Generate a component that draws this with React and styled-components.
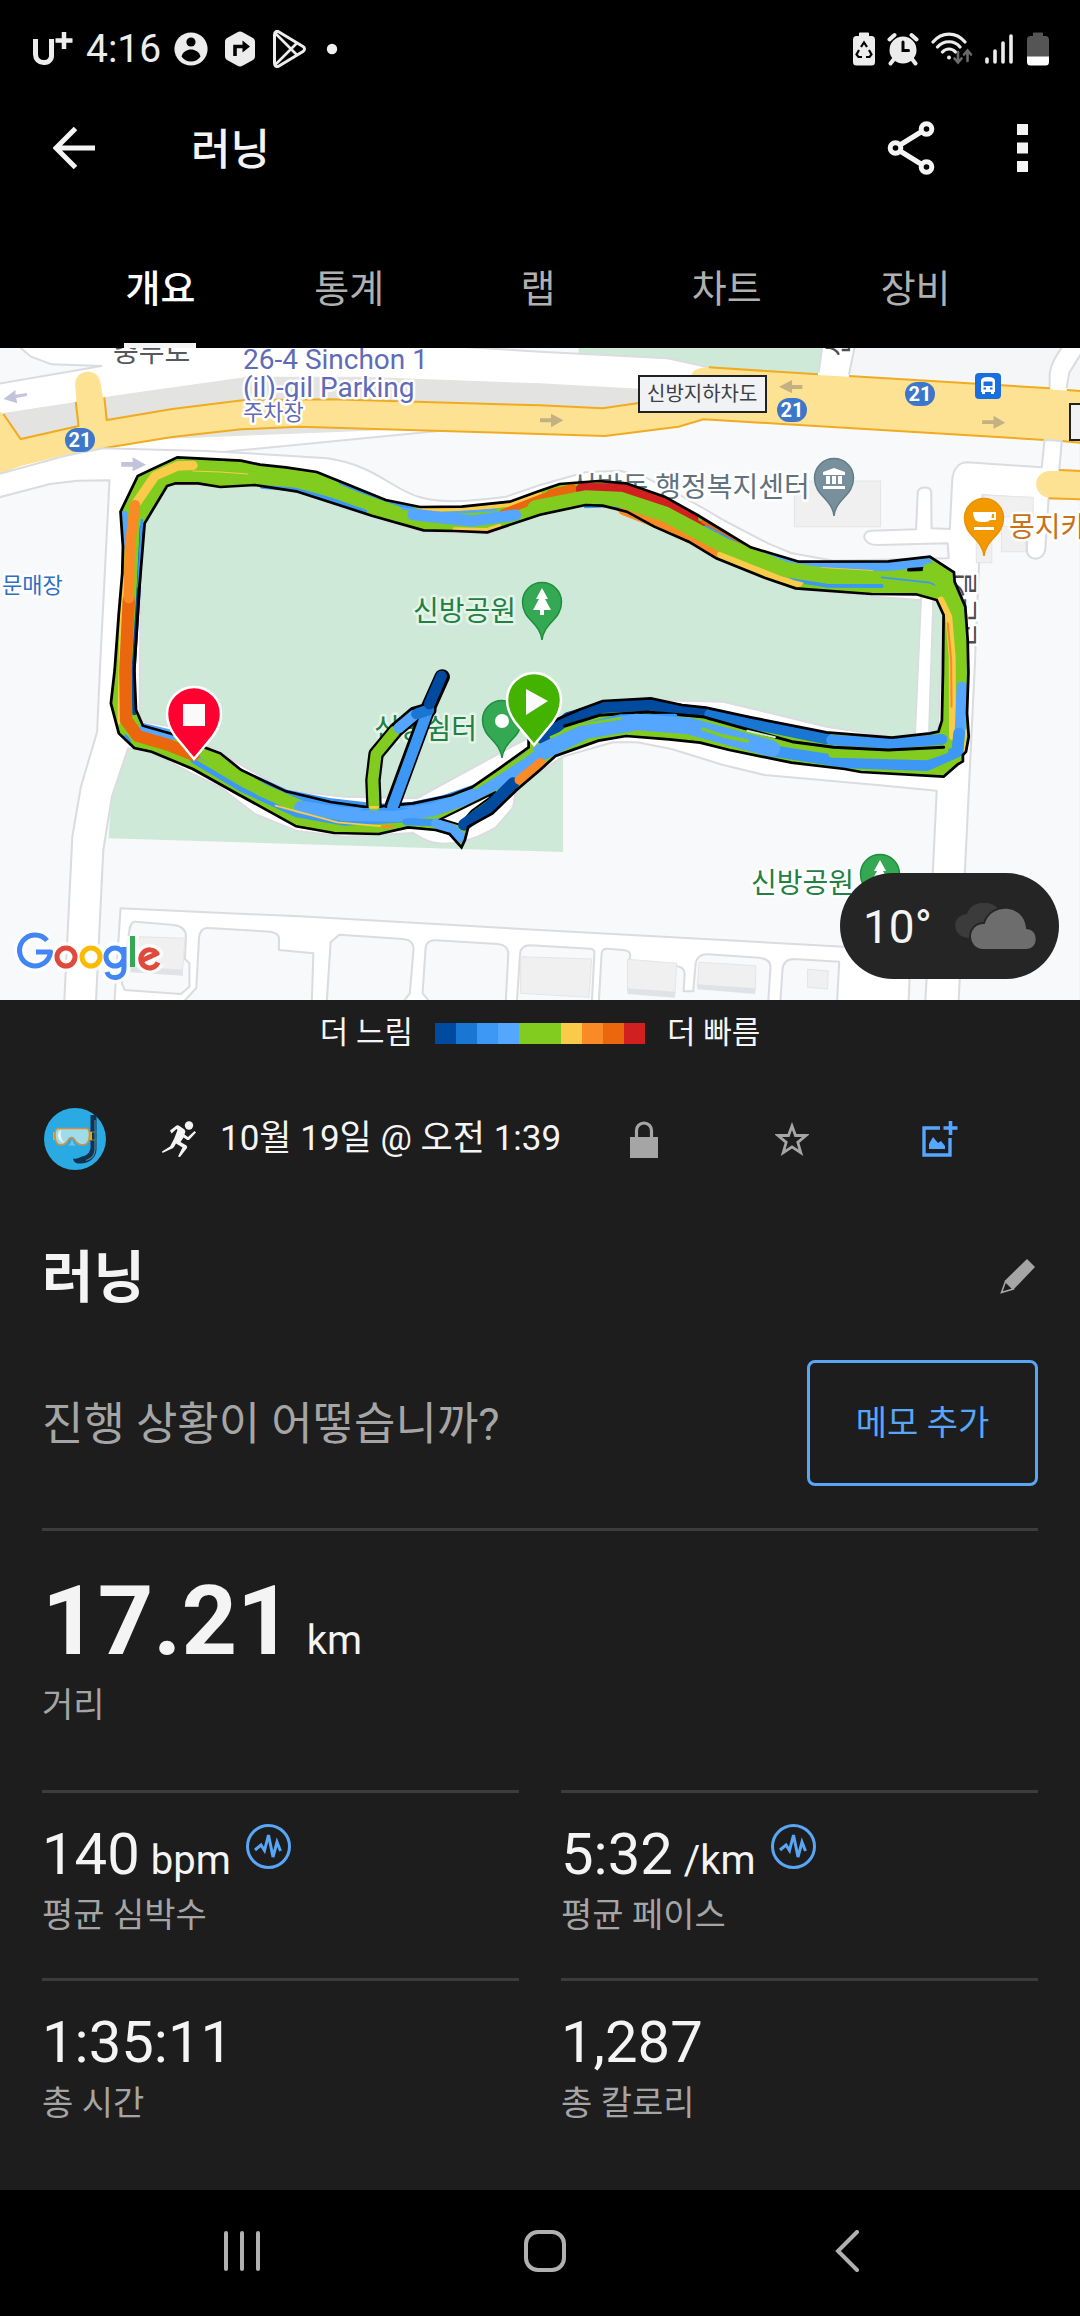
import React from "react";
import styled, { createGlobalStyle } from "styled-components";

const color = {
  panel: "#1d1d1d",
  text: "#f4f4f4",
  muted: "#a5a5a5",
  accent: "#58a6f5",
  line: "#3c3c3c",
  navy: "#004a9f",
  deepBlue: "#1976d2",
  blue: "#3c97f5",
  sky: "#55a6ff",
  green: "#82cb1f",
  yellow: "#facb4a",
  orange: "#fa8a26",
  deepOrange: "#ea670e",
  red: "#d22020",
};

const GlobalStyle = createGlobalStyle`
  * { box-sizing: border-box; }
  body { margin: 0; background: #000; }
  button { font: inherit; color: inherit; background: none; border: 0; padding: 0; cursor: pointer; }
  svg { display: block; }
`;

const Screen = styled.div`
  min-height: 100vh;
  display: flex;
  flex-direction: column;
  background: #000;
  color: ${color.text};
  font-family: Roboto, "Noto Sans CJK KR", sans-serif;
`;

/* ---------- header ---------- */

const StatusBar = styled.div`
  height: 98px;
  padding: 0 31px 0 32px;
  display: flex;
  align-items: center;
  justify-content: space-between;
`;

const StatusGroup = styled.div`
  display: flex;
  align-items: center;
  gap: ${(p) => p.$gap}px;
`;

const Clock = styled.time`
  font-size: 39px;
  line-height: 48px;
  color: #ececec;
`;

const AppBar = styled.header`
  height: 100px;
  padding: 0 26px 0 42px;
  display: flex;
  align-items: center;
`;

const AppActions = styled.div`
  display: flex;
  gap: 47px;
`;

const IconButton = styled.button`
  width: ${(p) => p.$width}px;
  height: 64px;
  flex: none;
  display: flex;
  align-items: center;
  justify-content: center;
`;

const AppTitle = styled.h1`
  flex: 1;
  margin: 0 0 0 85px;
  padding-top: 4px;
  font-size: 43px;
  line-height: 64px;
  font-weight: 500;
`;

const Tabs = styled.nav`
  height: 150px;
  padding: 0 70px 0 66px;
  display: grid;
  grid-template-columns: repeat(5, 1fr);
`;

const Tab = styled.button`
  display: flex;
  flex-direction: column;
  align-items: center;
  justify-content: space-between;
  font-size: 38px;
  line-height: 50px;
  padding-top: 66px;
  font-weight: ${(p) => (p.$active ? 500 : 400)};
  color: ${(p) => (p.$active ? "#fff" : "#b0b0b0")};

  &::after {
    content: "";
    width: 72px;
    height: 5px;
    background: ${(p) => (p.$active ? "#f4f4f4" : "transparent")};
  }
`;

/* ---------- map ---------- */

const MapArea = styled.section`
  position: relative;
`;

const MapSvg = styled.svg`
  width: 100%;
  height: auto;
`;

const Weather = styled.div`
  position: absolute;
  right: 21px;
  bottom: 21px;
  width: 219px;
  height: 106px;
  border-radius: 53px;
  background: #252525;
  padding: 2px 22px 0 23px;
  display: flex;
  align-items: center;
  justify-content: space-between;
  font-size: 46px;
  line-height: 60px;
`;

const MapLabel = styled.text`
  font-size: ${(p) => p.$size || 28}px;
  fill: ${(p) => p.$fill};
  paint-order: stroke;
  stroke: ${(p) => p.$halo || "#fff"};
  stroke-width: 5px;
  stroke-linejoin: round;
`;

const BadgeText = styled.text`
  font-size: 20px;
  font-weight: 700;
  fill: #fff;
  text-anchor: middle;
`;

const SignText = styled.text`
  font-size: 20px;
  fill: #3c4043;
`;

/* ---------- details ---------- */

const Details = styled.main`
  flex: 1;
  background: ${color.panel};
`;

const Legend = styled.div`
  height: 66px;
  display: flex;
  align-items: center;
  justify-content: center;
  gap: 22px;
  font-size: 31px;
  line-height: 42px;
`;

const Scale = styled.div`
  display: flex;
`;

const Swatch = styled.span`
  width: 21px;
  height: 21px;
  background: ${(p) => p.$color};
`;

const Content = styled.div`
  padding: 0 42px;
`;

const InfoRow = styled.div`
  height: 146px;
  padding-left: 2px;
  display: flex;
  align-items: center;
`;

const Sport = styled.div`
  margin-left: 56px;
  flex: 1;
  display: flex;
  align-items: center;
  gap: 24px;
  font-size: 35px;
  line-height: 48px;
`;

const InfoActions = styled.div`
  display: flex;
  gap: 84px;
  margin-right: 66px;
`;

const TitleRow = styled.div`
  height: 128px;
  display: flex;
  align-items: center;
  justify-content: space-between;
`;

const ActivityTitle = styled.h2`
  margin: 0;
  padding-top: 4px;
  font-size: 56px;
  line-height: 72px;
  font-weight: 700;
`;

const NoteRow = styled.div`
  padding: 20px 0 42px;
  display: flex;
  align-items: center;
  justify-content: space-between;
`;

const Prompt = styled.p`
  margin: 0;
  padding-top: 4px;
  font-size: 45px;
  line-height: 60px;
  color: ${color.muted};
`;

const NoteButton = styled.button`
  width: 231px;
  height: 126px;
  border: 3px solid ${color.accent};
  border-radius: 8px;
  font-size: 34px;
  line-height: 44px;
  color: ${color.accent};
`;

const Stats = styled.dl`
  margin: 0;
  display: grid;
  grid-template-columns: 1fr 1fr;
  column-gap: 42px;
`;

const Stat = styled.div`
  grid-column: ${(p) => (p.$wide ? "1 / -1" : "auto")};
  height: ${(p) => (p.$wide ? 262 : 188)}px;
  border-top: 3px solid ${color.line};
  padding-top: ${(p) => (p.$wide ? 32 : 26)}px;
  display: flex;
  flex-direction: column-reverse;
  justify-content: flex-end;
`;

const StatLabel = styled.dt`
  margin-top: 4px;
  font-size: 34px;
  line-height: 44px;
  color: ${color.muted};
`;

const StatValue = styled.dd`
  margin: 0;
  height: ${(p) => (p.$wide ? 116 : 70)}px;
  display: flex;
  align-items: baseline;
  gap: ${(p) => (p.$wide ? 14 : 11)}px;
  font-size: ${(p) => (p.$wide ? 97 : 58)}px;
  line-height: ${(p) => (p.$wide ? 116 : 70)}px;
  font-weight: ${(p) => (p.$wide ? 700 : 400)};
`;

const Unit = styled.span`
  font-size: 40px;
  line-height: 48px;
  font-weight: 400;
`;

const Pulse = styled.button`
  align-self: flex-start;
  margin: 5px 0 0 4px;
`;

const NavBar = styled.nav`
  height: 126px;
  padding: 0 81px 4px 90px;
  display: grid;
  grid-template-columns: repeat(3, 1fr);
`;

const NavButton = styled.button`
  display: flex;
  align-items: center;
  justify-content: center;
`;

/* ---------- icons ---------- */

const CarrierLogo = () => (
  <svg width="41" height="36" viewBox="0 0 41 36" fill="none" stroke="#ececec" aria-label="U+">
    <path d="M3.500 8V23.500a8 8 0 0 0 8 8h1a7 7 0 0 0 7-8V8" strokeWidth="5" />
    <path d="M32 1v17M23.500 9.500h17" strokeWidth="4.500" />
  </svg>
);

const AccountIcon = () => (
  <svg width="34" height="34" viewBox="0 0 34 34">
    <circle cx="17" cy="17" r="16.600" fill="#ececec" />
    <circle cx="17" cy="10" r="4.600" fill="#000" />
    <path d="M7.500 24.500C9 19.500 13 17.500 17 17.500s8 2 9.500 7C24.500 27.500 21 29.500 17 29.500s-7.500-2-9.500-5Z" fill="#000" />
  </svg>
);

const HexTurnIcon = () => (
  <svg width="32" height="36" viewBox="0 0 32 36">
    <path d="M16 .5c1 0 2 .3 3 1l9.500 5.300c1.700 1 2.500 2.200 2.500 4v14.400c0 1.800-.8 3-2.500 4L19 34.500c-2 1.300-4 1.300-6 0L3.500 29.200c-1.700-1-2.500-2.200-2.500-4V10.800c0-1.800.8-3 2.500-4L13 1.500c1-.7 2-1 3-1Z" fill="#ececec" />
    <path d="M11 25V15.500h8" fill="none" stroke="#000" strokeWidth="3.600" />
    <path d="M18.500 9.500v12l7.500-6Z" fill="#000" />
  </svg>
);

const PlayStoreIcon = () => (
  <svg width="34" height="38" viewBox="0 0 34 38" fill="none" stroke="#ececec" strokeWidth="3" strokeLinejoin="round">
    <path d="M2.500 5v28c0 3 2 4.500 4.500 3L31 21.500c2-1.200 2-3.800 0-5L7 2C4.500.5 2.500 2 2.500 5Z" />
    <path d="M3.500 3.500 25 25M3.500 34.500 25 13" strokeWidth="2.600" />
  </svg>
);

const MoreDot = () => (
  <svg width="20" height="12" viewBox="0 0 20 12">
    <circle cx="10" cy="6" r="5.200" fill="#f0f0f0" />
  </svg>
);

const RecycleBattery = () => (
  <svg width="22" height="34" viewBox="0 0 22 34">
    <path d="M6 1.500Q6 .5 7 .5h8q1 0 1 1V4h2.500Q22 4 22 8v22q0 3.500-3.500 3.500h-15Q0 33.500 0 30V8q0-4 3.500-4H6Z" fill="#ececec" />
    <path d="m8 15 3-4.500 3 4.500M16 18l2.500 4.500-2 2.500H13M9 25H5.500l-2-2.500L6 18" fill="none" stroke="#000" strokeWidth="2.200" />
  </svg>
);

const AlarmIcon = () => (
  <svg width="32" height="34" viewBox="0 0 32 34">
    <circle cx="16" cy="18" r="13.500" fill="#ececec" />
    <path d="M2.500 7.500 7.500 3M29.500 7.500l-5-4.500M7 27l-3.500 4.500M25 27l3.500 4.500" stroke="#ececec" strokeWidth="4" strokeLinecap="round" />
    <path d="M16 10v8.500h5.500" fill="none" stroke="#000" strokeWidth="3" strokeLinecap="round" />
  </svg>
);

const WifiIcon = () => (
  <svg width="42" height="34" viewBox="0 0 42 34" fill="none" stroke="#ececec" strokeWidth="3.200" strokeLinecap="round">
    <path d="M2 10C11-.5 25-.5 34 10M6.500 15c6-7 17-7 22.500 0M11.500 20c3.500-4 9.500-4 13 0" />
    <circle cx="18" cy="25.500" r="2" fill="#ececec" stroke="none" />
    <path d="M27 20v10m-3.500-3.500L27 30.500l3.500-4M36.500 29V19m-3.500 3.500 3.500-4 3.500 4" stroke="#6a6a6a" strokeWidth="2.600" />
  </svg>
);

const SignalIcon = () => (
  <svg width="30" height="32" viewBox="0 0 30 32" stroke="#ececec" strokeWidth="3.600" strokeLinecap="round">
    <path d="M2 26v3M10 18v11M18 10v19M26 3v26" />
  </svg>
);

const BatteryIcon = () => (
  <svg width="22" height="34" viewBox="0 0 22 34">
    <path d="M6 1.500Q6 .5 7 .5h8q1 0 1 1V4h2.500Q22 4 22 8v17H0V8q0-4 3.500-4H6Z" fill="#555" />
    <path d="M0 24.500h22V30q0 3.500-3.500 3.500h-15Q0 33.500 0 30Z" fill="#fff" />
  </svg>
);

const BackArrow = () => (
  <svg width="42" height="42" viewBox="0 0 42 42" fill="none" stroke="#f4f4f4" strokeWidth="5">
    <path d="M42 21H5M22.500 1.500 3 21l19.500 19.500" />
  </svg>
);

const ShareIcon = () => (
  <svg width="48" height="54" viewBox="0 0 48 54" fill="none" stroke="#f4f4f4" strokeWidth="5">
    <path d="M13 24 34 11M13 30l21 13" />
    <circle cx="8.500" cy="27" r="5.300" />
    <circle cx="39.500" cy="8" r="5.300" />
    <circle cx="39.500" cy="46" r="5.300" />
  </svg>
);

const KebabIcon = () => (
  <svg width="11" height="48" viewBox="0 0 11 48" fill="#f4f4f4">
    <path d="M0 0h11v11H0zM0 18.500h11v11H0zM0 37h11v11H0z" />
  </svg>
);

const CloudIcon = () => (
  <svg width="82" height="48" viewBox="0 0 82 48">
    <path d="M14 35C-4 34-4 12 12 11 16-3 38-4 45 8L38 20 20 24Z" fill="#3b3b3b" />
    <path d="M28 47C10 46 11 20 29 20 36-2 70 0 72 25c13 1 13 21 0 22Z" fill="#6d6d6d" stroke="#252525" strokeWidth="2" />
  </svg>
);

const Avatar = () => (
  <svg width="62" height="62" viewBox="0 0 62 62" role="img" aria-label="프로필">
    <circle cx="31" cy="31" r="31" fill="#2aaae2" />
    <path d="M46.500 7h6v34c0 9-8 15-17 14.500-4 0-6-2-6.500-5 3 1 6-.5 9-2 6-1 8.500-5 8.500-10Z" fill="#0c3350" />
    <path d="M51 12v29c0 6-4 10-9 11.500" fill="none" stroke="#5d7f97" strokeWidth="1.200" />
    <path d="M45 24h8M45 32h8" stroke="#5d6b60" strokeWidth="1.500" />
    <path d="M9 24h4v8H9zM44 24h4v8h-4z" fill="#f2a900" />
    <path d="M14 20.500h28q4 0 3.500 7.500-.5 9-7 9c-4 0-6-2-7.500-4.500-1.500-4-5.500-4-7 0C22.500 35 21 37 17.500 37c-6 0-6.500-5-6.500-9.500s.5-7 3-7Z" fill="#9fdbe8" stroke="#cf8f45" strokeWidth="1.600" />
    <path d="M17 22c-5 3-3.500 11 3 13-3-4-4-9-3-13Z" fill="#e8f7fa" />
    <path d="M24 37.500q3.500-2 4-8 .5 6 4 8Z" fill="#6fc4de" />
  </svg>
);

const RunnerIcon = () => (
  <svg width="34" height="36" viewBox="0 0 34 36" fill="#f4f4f4">
    <circle cx="27" cy="4.500" r="4.200" />
    <path d="M8 9.500 14.500 4.500Q16 4 17.500 5L22.500 8.500Q24 10 23 12L22.500 13.500 26 16 32.500 10 34 11.500 27.500 18.500Q26 19.500 24.500 18.500L21.500 16.500 18.500 21 24.500 24.500Q25.500 25.500 25 27L18 36 16 35.500 20.500 26.500 14 22.500 12 26Q11 27.500 9 28L.5 32 0 30.500 8 25.500 12 18 15.500 9 14.500 8 9.500 12.500Z" />
  </svg>
);

const LockIcon = () => (
  <svg width="28" height="37" viewBox="0 0 28 37">
    <path d="M6.500 17V9.500a7.500 7.500 0 0 1 15 0V17" fill="none" stroke={color.muted} strokeWidth="3.200" />
    <path d="M0 16h28v21H0z" fill={color.muted} />
  </svg>
);

const StarIcon = () => (
  <svg width="34" height="34" viewBox="0 0 34 34" fill="none" stroke={color.muted} strokeWidth="2.800">
    <path d="m17 4 3.500 9.500H31l-8.200 6.800 3 10.400L17 24.900l-8.800 5.800 3-10.400L3 13.500h10.500Z" />
  </svg>
);

const AddImageIcon = () => (
  <svg width="36" height="36" viewBox="0 0 36 36">
    <path d="M18 7H2v27h26V17" fill="none" stroke={color.sky} strokeWidth="3.400" />
    <path d="M28.500 0v14M21.500 7h14" stroke={color.sky} strokeWidth="3.600" />
    <path d="M7 28v-5l4-7 5 6 3-2 4 5v3Z" fill={color.sky} />
  </svg>
);

const PencilIcon = () => (
  <svg width="36" height="36" viewBox="0 0 36 36">
    <path d="M27 1 35 9 13.500 31.500 4.500 23Z" fill={color.muted} />
    <path d="M5.500 23.500 1.500 34.500 13 31Z" fill="none" stroke={color.muted} strokeWidth="1.600" />
  </svg>
);

const PulseIcon = () => (
  <svg width="45" height="45" viewBox="0 0 45 45" fill="none" stroke={color.accent}>
    <circle cx="22.500" cy="22.500" r="21" strokeWidth="3" />
    <path d="m9 26 6-5 3.500 5.500L22.500 11l4.500 22 4-15 3.500 9" strokeWidth="3" />
  </svg>
);

const RecentsIcon = () => (
  <svg width="40" height="42" viewBox="0 0 40 42" stroke="#b0b0b0" strokeWidth="4" strokeLinecap="round">
    <path d="M4 3v36M20 3v36M36 3v36" />
  </svg>
);

const HomeIcon = () => (
  <svg width="42" height="42" viewBox="0 0 42 42" fill="none" stroke="#b0b0b0" strokeWidth="4">
    <rect x="2" y="2" width="38" height="38" rx="12" />
  </svg>
);

const NavBackIcon = () => (
  <svg width="25" height="42" viewBox="0 0 25 42" fill="none" stroke="#b0b0b0" strokeWidth="4" strokeLinecap="round">
    <path d="M22 2 3 21l19 19" />
  </svg>
);

/* ---------- map drawing ---------- */

const roadLine = { fill: "#fff", stroke: "#dadce0", strokeWidth: 6, strokeLinejoin: "round" };
const block = { fill: "#f8f9fb", stroke: "#dadce0", strokeWidth: 6, strokeLinejoin: "round" };

const BaseMap = () => (
  <>
    <rect width="3136" height="1990" fill="#f8f9fb" />
    <path d="M2475 0H3136V150L2465 108Z" fill="#f5f6f8" />
    <path d="M1680 0H2400L2375 103 2058 82 1938 57 1680 42Z" fill="#cfe9d8" />
    <path d="M315 1495 325 1360 375 1210 1600 1200 1635 1250V1536Z" fill="#cfe9d8" />

    {/* upper roads */}
    <path {...roadLine} d="M-10 132 295 78 150 73 90 50 50 15 1250 15 1568 35 1938 55 2058 82 2200 110 2000 200 -10 402Z" />
    <path d="M-10 222 220 186 250 140 300 172 390 158 720 110H1050L1568 130 1870 147 2000 150 1860 240 400 300 40 320Z" fill="#e3e3e2" />
    <path d="M-10 210 10 222 60 297 228 258 218 130C222 84 288 84 292 130L310 240 500 207 710 180 960 178 1568 196 1750 205 1880 185 2010 120C2000 90 2030 82 2058 82L3136 150V308L2043 238 1970 260 1757 288 1568 282 870 260 700 268 500 291 190 345 60 378 -10 405Z" fill="#fde293" />
    <path d="M10 222 60 297 228 258 220 186M303 172 310 240 500 207 710 180 960 178 1568 196 1750 205 1880 185M2058 82 2375 103M2465 108 3050 145M3097 150 3136 153M300 325 500 291 700 268 870 260 1568 282 1757 288 1970 260 2043 238 3035 300M3083 303 3136 308" fill="none" stroke="#f0ab22" strokeWidth="6" />
    <path d="M2390 0H2482L2465 110 2375 105ZM3050 148 3048 100C3052 70 3066 60 3080 15L3150 15 3110 90 3097 152Z" fill="#fff" />
    <path d="M2482 20 2465 104M2388 20 2377 98M3048 142V100C3052 70 3066 50 3084 20M3097 145 3105 98 3140 40" fill="none" stroke="#dadce0" strokeWidth="6" />

    {/* roads around the park */}
    <path
      {...roadLine}
      d="M-10 404 190 347 300 325 600 333 800 345 950 355C1090 375 1140 450 1220 472 1290 492 1370 483 1470 470L1568 435 1700 397 1800 392 1870 410C2000 475 2050 510 2100 540L2230 610 2300 640 2420 662 2755 655 2752 610 2550 615C2500 615 2500 573 2530 572L2660 568 2665 455C2670 438 2702 438 2704 455L2705 565 2758 567 2765 420C2768 385 2785 367 2810 367L3025 382 3033 300 3083 303 3076 390 3150 393V478L3045 475 3035 630C3030 665 2982 665 2982 630L2984 475 2853 465 2843 665 2830 990 2783 2000H2690L2720 1352 2548 1335 2220 1305 2100 1275 1950 1227 1850 1207 1780 1207 1635 1250 1500 1340 1490 1402 1440 1462C1380 1500 1290 1530 1230 1497L1200 1479 1000 1490 860 1472 740 1422 640 1342 550 1297 430 1232 372 1225 325 1370 300 1530 278 2000H186L210 1490 235 1340 282 1175 290 990 318 421 225 422 145 432 -10 474Z"
    />
    <path {...roadLine} fill="#cfe9d8" d="M410 600 420 545 485 435 740 435 860 455 1080 530 1230 577 1420 582 1568 520 1700 495 1830 515 2040 610 2300 745 2540 770 2740 785 2722 1200 2590 1190 2400 1160 2100 1085 1900 1080 1750 1092 1620 1150 1500 1212 1210 1375 1000 1370 830 1350 640 1240 500 1160 405 1142Z" />
    <path d="M2675 770H2710L2697 1190H2657Z" fill="#fff" stroke="#dadce0" strokeWidth="5" />
    <path d="M3136 393H3050C2995 393 2995 470 3050 474L3136 478Z" fill="#fde293" />
    <path d="M3075 390 3136 393M3045 475 3136 478" stroke="#f0ab22" strokeWidth="6" />

    {/* lower streets */}
    <path {...roadLine} d="M332 1990 350 1705 870 1729 1568 1770 2450 1820 2700 1835V2000H332Z" />
    <path d="M2450 1822H2712L2705 1990H2450Z" fill="#fff" />
    <path {...block} d="M375 1775Q378 1743 395 1745L505 1755Q540 1760 540 1790L537 1857 550 1870V1940L525 1962 362 1950 354 1930Z" />
    <path {...block} d="M578 1792Q582 1762 605 1764L785 1775Q810 1780 810 1795V1830L910 1840 905 2000H520L570 1944Z" />
    <path {...block} d="M960 1807 985 1784 1170 1797Q1200 1800 1201 1825L1190 1960 1160 2000H948Z" />
    <path {...block} d="M1236 1822Q1240 1800 1265 1801L1445 1812Q1475 1815 1476 1840L1468 2000H1260L1227 1960Z" />
    <path {...block} d="M1510 1842Q1512 1816 1540 1816L1715 1826Q1727 1828 1726 1840L1718 2000H1500Z" />
    <path {...block} d="M1747 1840Q1748 1825 1765 1826L1810 1830Q1830 1832 1830 1845L1828 1867 1960 1877Q1990 1880 1988 1905L1985 1954H2013L2020 1870Q2025 1842 2055 1843L2205 1853Q2240 1858 2237 1885L2230 2000H1738Z" />
    <path {...block} d="M2272 1890Q2275 1857 2305 1857L2437 1865 2430 2000H2265Z" />
    <path {...block} d="M2642 1890H2692L2686 2000H2638Z" />
    <path d="M405 1790 537 1795 530 1890 380 1880ZM1512 1850 1718 1857 1710 1972 1512 1960ZM1822 1858 1965 1870 1960 1960 1822 1950ZM2030 1867 2195 1877 2193 1950 2025 1938ZM2345 1888 2405 1893 2403 1947 2345 1942ZM2307 423H2557V560H2307ZM2853 465 3000 472V530H2905ZM2908 560H2978V635H2908ZM2835 600H2880V668H2835Z" fill="#f0f0f0" stroke="#e4e5e6" strokeWidth="3" />
    <path d="M380 1880 530 1890 532 1907 378 1897ZM1822 1945 1960 1955V1973L1822 1962ZM2025 1933 2193 1945V1962L2025 1948Z" fill="#e1e2e7" />

    {/* direction arrows */}
    <g fill="#c3c3dc">
      <path d="M10 177 45 150V164L78 159V168L47 174 50 190Z" />
      <path d="M352 366H385V352L424 374 385 394V380H352Z" />
    </g>
    <g fill="#c4b183">
      <path d="M2262 140 2300 120V135H2330V147H2300V160Z" />
      <path d="M1568 235H1600V221L1636 241 1600 262V247H1568Z" />
      <path d="M2852 241H2885V227L2919 248 2885 266V252H2852Z" />
    </g>
  </>
);

const OUTER =
  "M515 352 700 362 755 374 830 382 920 396 1120 480 1220 501 1340 500 1480 485 1568 452 1625 432 1738 423 1818 430 1930 470 2025 525 2180 622 2320 665 2580 664 2700 650 2770 697 2772 725 2803 800 2810 900 2812 1000 2808 1120 2813 1190 2805 1235 2796 1245 2796 1264 2780 1274 2740 1310 2500 1296 2453 1287 2298 1268 2118 1230 2033 1208 1943 1198 1818 1188 1738 1202 1613 1248 1568 1290 1500 1350 1430 1420 1360 1460 1350 1500 1340 1522 1305 1482 1265 1470 1185 1462 1100 1482 970 1479 860 1459 690 1362 560 1287 440 1235 390 1224 345 1180 322 1090 333 990 345 820 355 700 357 620 350 515 400 408 440 388Z";
const INNER =
  "M485 438 510 430 575 430 640 441 740 435 860 454 1080 527 1230 571 1320 573 1415 577 1568 524 1700 495 1750 497 1820 515 1900 560 2000 605 2080 655 2220 713 2310 745 2530 762 2660 763 2720 780 2740 825 2738 1000 2735 1142 2725 1175 2700 1180 2590 1193 2400 1177 2180 1132 2050 1103 1980 1095 1890 1075 1750 1083 1680 1110 1620 1137 1568 1172 1535 1200 1535 1222 1450 1285 1370 1342 1310 1366 1200 1390 1070 1402 960 1386 830 1354 700 1290 640 1240 600 1225 500 1182 415 1157 395 1110 390 990 405 740 420 550Z";

const segments = [
  [color.sky, 16, "M362 520 368 620"],
  [color.yellow, 8, "M358 710 350 880 345 1150"],
  [color.navy, 12, "M412 560 402 760 388 990 390 1120"],
  [color.blue, 8, "M412 540 402 740"],
  [color.blue, 12, "M990 428 1120 484 1200 508"],
  [color.blue, 12, "M760 440 860 449 960 478 1060 515"],
  [color.yellow, 12, "M1220 509 1350 508 1480 494 1568 462"],
  [color.yellow, 12, "M1320 568 1415 570 1450 558"],
  [color.sky, 8, "M1130 500 1280 520 1440 510"],
  [color.deepOrange, 20, "M1460 518 1568 474 1610 460"],
  [color.deepOrange, 28, "M1600 462 1662 446"],
  [color.red, 36, "M1690 447 1810 448 1920 488 2010 538"],
  [color.red, 14, "M1990 530 2050 560"],
  [color.deepOrange, 10, "M2040 545 2190 630"],
  [color.blue, 12, "M2050 562 2190 640 2330 682"],
  [color.sky, 26, "M2200 645 2320 680 2580 680 2694 668"],
  [color.yellow, 20, "M2330 688 2530 700"],
  ["#000", 12, "M2640 690 2690 686 2706 697"],
  [color.blue, 10, "M1700 500 1780 497 1840 516"],
  [color.orange, 30, "M1810 510 1930 558 2082 635"],
  [color.yellow, 26, "M2095 645 2200 690 2318 729"],
  [color.blue, 12, "M2180 665 2310 716 2400 737 2560 738"],
  [color.green, 38, "M1150 516 980 455 800 408"],
  [color.green, 46, "M1555 503 1700 474 1800 478 1930 522 2100 615 2280 688 2400 708 2540 716 2700 718"],
  [color.sky, 34, "M1200 524 1370 543 1496 525"],
  [color.yellow, 28, "M560 376 515 378 450 408 392 495"],
  [color.yellow, 3, "M560 393 640 396 720 402"],
  [color.blue, 10, "M2340 728 2400 736 2560 737"],
  [color.blue, 5, "M2560 712 2700 728 2775 760"],
  [color.blue, 10, "M2745 735 2778 755"],
  [color.green, 42, "M2700 690 2760 750 2788 830 2790 1020"],
  [color.yellow, 20, "M2732 780 2755 830 2765 950 2766 1190"],
  [color.orange, 6, "M2752 850 2762 960 2763 1100"],
  [color.sky, 30, "M2793 1040 2787 1180"],
  [color.yellow, 6, "M2806 1170 2800 1240"],
  [color.blue, 14, "M2570 1206 2740 1194"],
  [color.blue, 34, "M2785 1180 2780 1235 2690 1276 2460 1268 2240 1232"],
  [color.green, 18, "M2415 1244 2560 1248 2690 1252 2745 1232"],
  [color.navy, 34, "M1575 1195 1650 1133 1750 1102 1890 1095 2040 1118"],
  [color.deepBlue, 34, "M2062 1124 2230 1160 2400 1196"],
  [color.blue, 32, "M2415 1200 2590 1210 2735 1198"],
  ["#000", 9, "M1640 1158 1740 1126 1880 1116 2040 1130 2160 1165 2300 1205 2420 1222 2580 1230 2740 1222"],
  ["#cfe9d8", 6, "M2170 1172 2250 1192"],
  [color.blue, 14, "M1580 1225 1700 1155 1800 1130 1960 1128"],
  [color.sky, 50, "M1570 1238 1700 1172 1850 1146 2000 1158 2130 1195 2240 1226"],
  [color.green, 8, "M1600 1192 1680 1155 1800 1136"],
  [color.green, 10, "M2040 1167 2100 1188 2170 1203"],
  [color.sky, 30, "M420 1165 500 1185"],
  [color.blue, 12, "M365 1190 375 1205"],
  [color.blue, 14, "M560 1262 700 1348 860 1425 1000 1450 1180 1440"],
  [color.sky, 14, "M575 1245 640 1280 690 1320"],
  [color.blue, 34, "M690 1300 830 1366 960 1392 1100 1408 1200 1402 1300 1380"],
  [color.green, 40, "M600 1242 700 1310 760 1350 870 1400"],
  [color.sky, 40, "M874 1402 1000 1422 1150 1426 1260 1408 1350 1376 1470 1312 1568 1240"],
  [color.blue, 10, "M1290 1370 1400 1330 1530 1240"],
  [color.green, 12, "M1380 1342 1460 1290 1545 1232"],
  [color.yellow, 5, "M800 1397 980 1447 1120 1460"],
  [color.orange, 8, "M1110 1460 1140 1460"],
  [color.blue, 22, "M1180 1445 1262 1448"],
  [color.sky, 32, "M1268 1450 1312 1468 1338 1492"],
  [color.deepOrange, 36, "M374 780 364 990 366 1140 400 1188 490 1215 562 1245"],
  [color.orange, 30, "M392 495 377 620 374 775"],
];

const spurs = [
  ["M1140 1395 1245 1100 1284 1010", [[color.blue, "M1140 1400 1243 1110"], [color.deepBlue, "M1210 1122 1245 1110"], [color.navy, "M1247 1092 1282 1008"]]],
  ["M1086 1398 1083 1320 1092 1242 1150 1170 1205 1122 1245 1110", [[color.green, "M1086 1400 1083 1320 1092 1242 1146 1174"], [color.sky, "M1158 1164 1202 1126"], [color.deepBlue, "M1215 1120 1244 1110"]]],
];

const Route = () => (
  <>
    <path d={`${OUTER}${INNER}`} fill={color.green} fillRule="evenodd" />
    <g fill="none" strokeLinecap="round" strokeLinejoin="round">
      {segments.map(([stroke, width, d]) => (
        <path key={d} d={d} stroke={stroke} strokeWidth={width} />
      ))}
    </g>
    <path d="M1280 1437 1335 1454 1370 1412 1420 1375 1440 1356Z" fill="#fff" stroke="#000" strokeWidth="6" />
    <path d="M1490 1330 1420 1402 1348 1454" fill="none" stroke={color.navy} strokeWidth="36" strokeLinecap="round" />
    <path d="M1570 1268 1508 1320" fill="none" stroke={color.orange} strokeWidth="28" strokeLinecap="round" />
    <path d={OUTER} fill="none" stroke="#000" strokeWidth="8" />
    <path d={INNER} fill="none" stroke="#000" strokeWidth="8" />
    <g fill="none" strokeLinecap="round" strokeLinejoin="round">
      {spurs.map(([d]) => <path key={d} d={d} stroke="#000" strokeWidth="45" />)}
      <path d="M1060 1420 1180 1420" stroke={color.blue} strokeWidth="32" />
      {[...spurs].reverse().flatMap(([, parts]) => parts).map(([stroke, d]) => (
        <path key={d + stroke} d={d} stroke={stroke} strokeWidth="32" />
      ))}
      <path d="M990 1424 1150 1426 1250 1410" stroke={color.sky} strokeWidth="28" />
      <path d="M1076 1402h20" stroke={color.yellow} strokeWidth="8" />
    </g>
  </>
);

const PlacePin = ({ x, y, fill, edge, children }) => (
  <g transform={`translate(${x} ${y})`}>
    <path d="M0 38C-2 20-19.500 18-19.500 0a19.500 19.500 0 0 1 39 0C19.500 18 2 20 0 38Z" fill={fill} stroke={edge} strokeWidth="1.500" />
    {children}
  </g>
);

const RoutePin = ({ x, y, fill, children }) => (
  <g transform={`translate(${x} ${y})`}>
    <path d="M0 45-19 22C-24 15-27 9-27 0a27 27 0 0 1 54 0C27 9 24 15 19 22Z" fill={fill} stroke="#fff" strokeWidth="2.500" />
    {children}
  </g>
);

const RoadBadge = ({ x, y }) => (
  <g transform={`translate(${x} ${y})`}>
    <rect x="-15" y="-12" width="30" height="24" rx="12" fill="#3d77c9" />
    <BadgeText y="7">21</BadgeText>
  </g>
);

const tree = <path d="M0-14-6-3h3L-9 8h7v5h4V8h7L3-3h3Z" fill="#fff" />;

const GoogleLogo = ({ halo }) => (
  <g fill="none" stroke={halo ? "#fff" : undefined} strokeWidth={halo ? 12 : 5} strokeLinejoin="round" opacity={halo ? 0.8 : 1}>
    <path d="M47 592.500A15.500 15.500 0 1 0 50.500 604H36" stroke={halo ? "#fff" : "#4285f4"} />
    <circle cx="66" cy="609" r="9" stroke={halo ? "#fff" : "#e04a3c"} />
    <circle cx="91" cy="609" r="9" stroke={halo ? "#fff" : "#fabb05"} />
    <path d="M124 609a9 9 0 1 0-18 0 9 9 0 0 0 18 0M124 599v21c0 12-15 12-17 4" stroke={halo ? "#fff" : "#4285f4"} />
    <path d="M132.500 588v31" stroke={halo ? "#fff" : "#34a853"} />
    <path d="M142 612.500 157 605.500A9 9 0 1 0 158 614.500" stroke={halo ? "#fff" : "#e04a3c"} />
  </g>
);

const RouteMap = () => (
  <MapSvg viewBox="0 0 1080 652" role="img" aria-label="러닝 경로 지도">
    <g transform="translate(0 -8) scale(.34438 .33333)">
      <BaseMap />
    </g>

    <MapLabel x="113" y="14" $fill="#55585c">충무로</MapLabel>
    <MapLabel x="243" y="21" $fill="#5f6bb8">26-4 Sinchon 1</MapLabel>
    <MapLabel x="243" y="49" $fill="#5f6bb8">(il)-gil Parking</MapLabel>
    <MapLabel x="243" y="72" $size="22" $fill="#5f6bb8">주차장</MapLabel>
    <MapLabel x="2" y="245" $size="22" $fill="#2f6fc5">문매장</MapLabel>
    <MapLabel x="413" y="273" $fill="#218144" $halo="#e6f4ea">신방공원</MapLabel>
    <MapLabel x="374" y="391" $fill="#218144" $halo="#e6f4ea">신방쉼터</MapLabel>
    <MapLabel x="751" y="545" $fill="#218144">신방공원</MapLabel>
    <MapLabel x="571" y="149" $fill="#5f7280">신방동 행정복지센터</MapLabel>
    <MapLabel x="1009" y="189" $fill="#c8701a">몽지카</MapLabel>
    <MapLabel transform="translate(974 224) rotate(-90)" textAnchor="end" $fill="#4a4d52">신촌길</MapLabel>
    <MapLabel transform="translate(848 9) rotate(-90)" $fill="#4a4d52">신</MapLabel>

    <rect x="639" y="28" width="127" height="36" fill="#f1f2f4" stroke="#202124" strokeWidth="2" />
    <SignText x="647" y="53">신방지하차도</SignText>
    <rect x="1070" y="56" width="30" height="36" fill="#f1f2f4" stroke="#202124" strokeWidth="2" />
    <RoadBadge x="80" y="92" />
    <RoadBadge x="792" y="62" />
    <RoadBadge x="920" y="46" />
    <g transform="translate(975 25)">
      <rect width="26" height="26" rx="4" fill="#1a6fe0" />
      <path d="M6 8q0-4 7-4t7 4v11h-1v2h-3v-2h-6v2H7v-2H6Z" fill="#fff" />
      <path d="M8.500 8.500h9V13h-9z" fill="#1a6fe0" />
      <path d="M8.500 15.500h2.500M15 15.500h2.500" stroke="#1a6fe0" strokeWidth="2" />
    </g>

    <PlacePin x="834" y="130" fill="#78909c" edge="#607d8b">
      <path d="M-11-3V-6L0-10 11-6v3ZM-8-2h4v8h-4zM-2-2h4v8h-4zM4-2h4v8H4zM-11 8h22v3h-22z" fill="#fff" />
    </PlacePin>
    <PlacePin x="984" y="170" fill="#f29900" edge="#e89200">
      <path d="M-11-6H8V-4q0 8-7 8h-4q-8 0-8-10ZM-10 9H10v3H-10z" fill="#fff" />
      <path d="M7-5h4v6H6" fill="none" stroke="#fff" strokeWidth="2" />
    </PlacePin>
    <PlacePin x="542" y="254" fill="#34a853" edge="#1e8e3e">{tree}</PlacePin>
    <PlacePin x="502" y="372" fill="#34a853" edge="#1e8e3e"><circle cy="1" r="7" fill="#fff" /></PlacePin>
    <PlacePin x="880" y="526" fill="#34a853" edge="#1e8e3e">{tree}</PlacePin>

    <g transform="translate(0 -8) scale(.34438 .33333)">
      <Route />
    </g>

    <RoutePin x="194" y="366" fill="#ff0030"><path d="M-11-10h22v22h-22z" fill="#fafafa" /></RoutePin>
    <RoutePin x="534" y="352" fill="#43b300"><path d="M-8-11v26L14 1Z" fill="#fafafa" /></RoutePin>

    <GoogleLogo halo />
    <GoogleLogo />
  </MapSvg>
);

/* ---------- page ---------- */

const tabs = ["개요", "통계", "랩", "차트", "장비"];
const paceScale = [
  color.navy, color.deepBlue, color.blue, color.sky, color.green,
  color.green, color.yellow, color.orange, color.deepOrange, color.red,
];
const stats = [
  { label: "거리", value: "17.21", unit: "km", wide: true },
  { label: "평균 심박수", value: "140", unit: "bpm", pulse: true },
  { label: "평균 페이스", value: "5:32", unit: "/km", pulse: true },
  { label: "총 시간", value: "1:35:11" },
  { label: "총 칼로리", value: "1,287" },
];

export default function App() {
  return (
    <Screen>
      <GlobalStyle />
      <StatusBar>
        <StatusGroup $gap={13}>
          <CarrierLogo />
          <Clock>4:16</Clock>
          <StatusGroup $gap={16}>
            <AccountIcon />
            <HexTurnIcon />
            <PlayStoreIcon />
            <MoreDot />
          </StatusGroup>
        </StatusGroup>
        <StatusGroup $gap={12}>
          <RecycleBattery />
          <AlarmIcon />
          <WifiIcon />
          <SignalIcon />
          <BatteryIcon />
        </StatusGroup>
      </StatusBar>
      <AppBar>
        <IconButton $width={64} aria-label="뒤로"><BackArrow /></IconButton>
        <AppTitle>러닝</AppTitle>
        <AppActions>
          <IconButton $width={64} aria-label="공유"><ShareIcon /></IconButton>
          <IconButton $width={64} aria-label="더보기"><KebabIcon /></IconButton>
        </AppActions>
      </AppBar>
      <Tabs>
        {tabs.map((name, i) => (
          <Tab key={name} $active={i === 0}>{name}</Tab>
        ))}
      </Tabs>

      <MapArea>
        <RouteMap />
        <Weather>
          <span>10°</span>
          <CloudIcon />
        </Weather>
      </MapArea>

      <Details>
        <Legend>
          <span>더 느림</span>
          <Scale>
            {paceScale.map((c, i) => <Swatch key={i} $color={c} />)}
          </Scale>
          <span>더 빠름</span>
        </Legend>
        <Content>
          <InfoRow>
            <Avatar />
            <Sport>
              <RunnerIcon />
              <time>10월 19일 @ 오전 1:39</time>
            </Sport>
            <InfoActions>
              <IconButton $width={64} aria-label="비공개"><LockIcon /></IconButton>
              <IconButton $width={64} aria-label="즐겨찾기"><StarIcon /></IconButton>
              <IconButton $width={64} aria-label="사진 추가"><AddImageIcon /></IconButton>
            </InfoActions>
          </InfoRow>
          <TitleRow>
            <ActivityTitle>러닝</ActivityTitle>
            <IconButton $width={40} aria-label="이름 편집"><PencilIcon /></IconButton>
          </TitleRow>
          <NoteRow>
            <Prompt>진행 상황이 어떻습니까?</Prompt>
            <NoteButton>메모 추가</NoteButton>
          </NoteRow>
          <Stats>
            {stats.map((s) => (
              <Stat key={s.label} $wide={s.wide}>
                <StatLabel>{s.label}</StatLabel>
                <StatValue $wide={s.wide}>
                  {s.value}
                  {s.unit && <Unit>{s.unit}</Unit>}
                  {s.pulse && <Pulse aria-label={`${s.label} 차트`}><PulseIcon /></Pulse>}
                </StatValue>
              </Stat>
            ))}
          </Stats>
        </Content>
      </Details>

      <NavBar>
        <NavButton aria-label="최근 앱"><RecentsIcon /></NavButton>
        <NavButton aria-label="홈"><HomeIcon /></NavButton>
        <NavButton aria-label="뒤로 가기"><NavBackIcon /></NavButton>
      </NavBar>
    </Screen>
  );
}
